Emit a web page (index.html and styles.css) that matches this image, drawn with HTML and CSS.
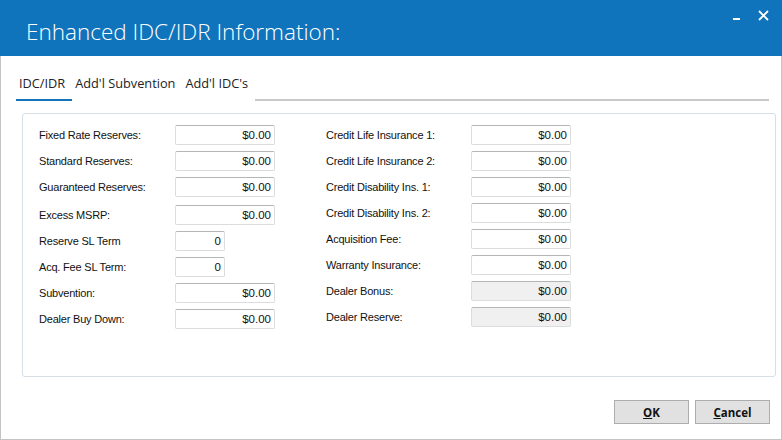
FILE: index.html
```html
<!DOCTYPE html>
<html lang="en">
<head>
    <meta charset="UTF-8">
    <title>Enhanced IDC/IDR Information</title>
    <link rel="stylesheet" href="styles.css">
</head>
<body>
    <div class="window">
        <div class="titlebar">
            <h1 class="title">Enhanced IDC/IDR Information:</h1>
            <div class="controls">
                <svg class="btn-min" width="8" height="3" viewBox="0 0 8 3"><rect x="0" y="0" width="7" height="2" fill="#fff"/></svg>
                <svg class="btn-close" width="11" height="11" viewBox="0 0 11 11"><path d="M1 1 L10 10 M10 1 L1 10" stroke="#fff" stroke-width="1.8"/></svg>
            </div>
        </div>

        <div class="content">
            <div class="tabs">
                <div class="tab active">IDC/IDR</div>
                <div class="tab">Add'l Subvention</div>
                <div class="tab">Add'l IDC's</div>
                <div class="tab-fill"></div>
            </div>

            <div class="panel">
                <div class="col col-left">
                    <div class="row"><label>Fixed Rate Reserves:</label><div class="field">$0.00</div></div>
                    <div class="row"><label>Standard Reserves:</label><div class="field">$0.00</div></div>
                    <div class="row"><label>Guaranteed Reserves:</label><div class="field">$0.00</div></div>
                    <div class="row shift"><label>Excess MSRP:</label><div class="field">$0.00</div></div>
                    <div class="row"><label>Reserve SL Term</label><div class="field small">0</div></div>
                    <div class="row"><label>Acq. Fee SL Term:</label><div class="field small">0</div></div>
                    <div class="row"><label>Subvention:</label><div class="field">$0.00</div></div>
                    <div class="row"><label>Dealer Buy Down:</label><div class="field">$0.00</div></div>
                </div>
                <div class="col col-right">
                    <div class="row"><label>Credit Life Insurance 1:</label><div class="field">$0.00</div></div>
                    <div class="row"><label>Credit Life Insurance 2:</label><div class="field">$0.00</div></div>
                    <div class="row"><label>Credit Disability Ins. 1:</label><div class="field">$0.00</div></div>
                    <div class="row"><label>Credit Disability Ins. 2:</label><div class="field">$0.00</div></div>
                    <div class="row"><label>Acquisition Fee:</label><div class="field">$0.00</div></div>
                    <div class="row"><label>Warranty Insurance:</label><div class="field">$0.00</div></div>
                    <div class="row"><label>Dealer Bonus:</label><div class="field disabled">$0.00</div></div>
                    <div class="row"><label>Dealer Reserve:</label><div class="field disabled">$0.00</div></div>
                </div>
            </div>

            <div class="footer">
                <button class="btn"><u>O</u>K</button>
                <button class="btn"><u>C</u>ancel</button>
            </div>
        </div>
    </div>
</body>
</html>
```

FILE: styles.css
```css
body {
    margin: 0;
    background: #fff;
    font-family: "Liberation Sans", Arial, sans-serif;
}
.window {
    width: 782px;
    height: 440px;
    display: flex;
    flex-direction: column;
}
.titlebar {
    height: 56px;
    background: #1074bc;
    display: flex;
    align-items: flex-start;
    flex-shrink: 0;
}
.title {
    margin: 0;
    padding: 16px 0 0 26px;
    font-family: "Open Sans", sans-serif;
    font-weight: 300;
    font-size: 22.5px;
    color: #fff;
    flex: 1;
}
.controls {
    display: flex;
    align-items: flex-start;
    padding: 10px 13px 0 0;
}
.btn-min {
    margin: 8px 17px 0 0;
}
.content {
    flex: 1;
    border: 1px solid #c4c4c4;
    border-top: none;
    display: flex;
    flex-direction: column;
}
.tabs {
    display: flex;
    margin: 18px 12px 0 15px;
}
.tab {
    font-family: "Open Sans", sans-serif;
    font-size: 12.75px;
    color: #222;
    padding: 0 7px 7px 3px;
    border-bottom: 2px solid transparent;
}
.tab.active {
    border-bottom-color: #1674bb;
}
.tab-fill {
    flex: 1;
    border-bottom: 2px solid #c9c9c9;
}
.panel {
    box-sizing: border-box;
    margin: 12px 5px 0 21px;
    height: 264px;
    border: 1px solid #d4dfe7;
    border-radius: 3px;
    display: flex;
    padding: 11px 0 0 16px;
}
.col {
    display: flex;
    flex-direction: column;
    gap: 6px;
}
.col-left label {
    width: 136px;
}
.col-right {
    margin-left: 51px;
}
.col-right label {
    width: 145px;
}
.row {
    display: flex;
    align-items: center;
    height: 20px;
}
.row.shift {
    margin-top: 2px;
}
label {
    font-size: 11px;
    letter-spacing: -0.2px;
    color: #111;
}
.field {
    box-sizing: border-box;
    width: 100px;
    height: 20px;
    border: 1px solid #dcdcdc;
    border-top-color: #b5b5b5;
    border-radius: 2px;
    background: #fff;
    text-align: right;
    padding: 3px 3px 0 0;
    font-size: 11.5px;
    color: #111;
}
.field.small {
    width: 50px;
}
.field.disabled {
    background: #f0f0f0;
}
.footer {
    display: flex;
    justify-content: flex-end;
    gap: 6px;
    margin: 23px 11px 0 0;
}
.btn {
    width: 75px;
    height: 24px;
    background: #e1e1e1;
    border: 1px solid #adadad;
    font-family: "Open Sans", sans-serif;
    font-weight: 700;
    font-size: 11.5px;
    color: #111;
    padding: 0;
}
```
